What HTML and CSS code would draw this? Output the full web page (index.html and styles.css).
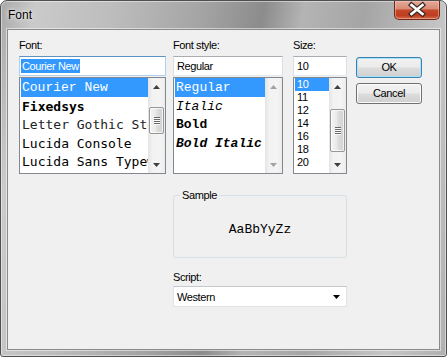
FILE: index.html
```html
<!DOCTYPE html>
<html lang="en">
<head>
    <meta charset="UTF-8">
    <title>Font</title>
    <link rel="stylesheet" href="styles.css">
</head>
<body>
    <div class="window">
        <div class="titlebar">
            <span class="title">Font</span>
            <div class="close">
                <svg width="44" height="17" viewBox="0 0 44 17">
                    <path d="M16.5 4 L27.5 13 M27.5 4 L16.5 13" stroke="#3c2a26" stroke-width="5" stroke-linecap="square"/>
                    <path d="M16.5 4 L27.5 13 M27.5 4 L16.5 13" stroke="#ffffff" stroke-width="2.6" stroke-linecap="square"/>
                </svg>
            </div>
        </div>
        <div class="client">
            <div class="top">
                <div class="col col-font">
                    <div class="label">Font:</div>
                    <div class="input focus"><span class="selected-text">Courier New</span></div>
                    <div class="list">
                        <div class="items">
                            <div class="item row-font selected courier">Courier New</div>
                            <div class="item row-font fixedsys">Fixedsys</div>
                            <div class="item row-font gothic">Letter Gothic Std</div>
                            <div class="item row-font lucida">Lucida Console</div>
                            <div class="item row-font lucida">Lucida Sans Typewriter</div>
                        </div>
                        <div class="scrollbar">
                            <div class="arrow"><svg width="7" height="4"><path d="M0 4 L3.5 0 L7 4 Z" fill="#404040"/></svg></div>
                            <div class="track">
                                <div class="thumb thumb-font">
                                    <span></span><span></span><span></span><span></span>
                                </div>
                            </div>
                            <div class="arrow"><svg width="7" height="4"><path d="M0 0 L7 0 L3.5 4 Z" fill="#404040"/></svg></div>
                        </div>
                    </div>
                </div>
                <div class="col col-style">
                    <div class="label">Font style:</div>
                    <div class="input">Regular</div>
                    <div class="list">
                        <div class="items">
                            <div class="item row-font courier selected">Regular</div>
                            <div class="item row-font courier italic">Italic</div>
                            <div class="item row-font courier bold">Bold</div>
                            <div class="item row-font courier bold italic">Bold Italic</div>
                        </div>
                        <div class="scrollbar">
                            <div class="arrow"><svg width="7" height="4"><path d="M0 4 L3.5 0 L7 4 Z" fill="#a3a3a3"/></svg></div>
                            <div class="track"></div>
                            <div class="arrow"><svg width="7" height="4"><path d="M0 0 L7 0 L3.5 4 Z" fill="#a3a3a3"/></svg></div>
                        </div>
                    </div>
                </div>
                <div class="col col-size">
                    <div class="label">Size:</div>
                    <div class="input">10</div>
                    <div class="list">
                        <div class="items">
                            <div class="item row-size selected">10</div>
                            <div class="item row-size">11</div>
                            <div class="item row-size">12</div>
                            <div class="item row-size">14</div>
                            <div class="item row-size">16</div>
                            <div class="item row-size">18</div>
                            <div class="item row-size">20</div>
                        </div>
                        <div class="scrollbar">
                            <div class="arrow"><svg width="7" height="4"><path d="M0 4 L3.5 0 L7 4 Z" fill="#404040"/></svg></div>
                            <div class="track">
                                <div class="thumb thumb-size">
                                    <span></span><span></span><span></span><span></span>
                                </div>
                            </div>
                            <div class="arrow"><svg width="7" height="4"><path d="M0 0 L7 0 L3.5 4 Z" fill="#404040"/></svg></div>
                        </div>
                    </div>
                </div>
                <div class="buttons">
                    <div class="button default">OK</div>
                    <div class="button">Cancel</div>
                </div>
            </div>
            <div class="bottom">
                <fieldset class="group">
                    <legend>Sample</legend>
                    <div class="sample">AaBbYyZz</div>
                </fieldset>
                <div class="label script-label">Script:</div>
                <div class="combo">
                    <span>Western</span>
                    <svg width="7" height="4"><path d="M0 0 L7 0 L3.5 4 Z" fill="#000"/></svg>
                </div>
            </div>
        </div>
    </div>
</body>
</html>
```

FILE: styles.css
```css
* {
    box-sizing: border-box;
}
body {
    margin: 0;
    background: #fff;
    font-family: "Liberation Sans", Arial, sans-serif;
    font-size: 11px;
    letter-spacing: -0.4px;
    color: #000;
}
.window {
    width: 447px;
    height: 357px;
    padding: 0 6px 6px;
    border: 1px solid #4f4f4f;
    border-radius: 7px 7px 3px 3px;
    background: linear-gradient(100deg, #a9a9a9 0%, #cacaca 7%, #bdbdbd 22%, #a4a4a4 40%, #8c8c8c 52%, #b4b4b4 60%, #a5a5a5 72%, #c6c6c6 88%, #b0b0b0 100%);
    box-shadow: inset 0 0 0 1px rgba(255, 255, 255, 0.45);
    display: flex;
    flex-direction: column;
}
.titlebar {
    height: 28px;
    display: flex;
    align-items: flex-start;
}
.title {
    font-size: 12px;
    letter-spacing: 0;
    line-height: 14px;
    padding: 7px 0 0 1px;
    text-shadow: 0 0 6px rgba(255, 255, 255, 0.9), 0 0 3px rgba(255, 255, 255, 0.8);
}
.close {
    margin-left: auto;
    width: 46px;
    height: 19px;
    border: 1px solid #6e2a1d;
    border-top: none;
    border-radius: 0 0 5px 5px;
    background: linear-gradient(#e2aa9b 0%, #d98b77 42%, #c6472a 52%, #c03c1f 80%, #d46c4e 100%);
    box-shadow: inset 0 0 0 1px rgba(255, 210, 190, 0.45);
}
.close svg {
    display: block;
}
.client {
    flex: 1;
    background: #f0f0f0;
    border: 1px solid #8a8a8a;
    box-shadow: 0 0 0 1px rgba(255, 255, 255, 0.5);
}
.top {
    display: flex;
    align-items: flex-start;
    padding: 8px 0 0 11px;
}
.col-font {
    width: 147px;
    margin-right: 7px;
}
.col-style {
    width: 110px;
    margin-right: 10px;
}
.col-size {
    width: 54px;
    margin-right: 9px;
}
.label {
    line-height: 15px;
    height: 15px;
}
.input {
    margin-top: 3px;
    height: 20px;
    background: #fff;
    border: 1px solid #dbdfe6;
    border-top-color: #abadb3;
    border-bottom-color: #e3e9ef;
    padding: 0 2px 0 3px;
    line-height: 18px;
    white-space: nowrap;
}
.input.focus {
    border-color: #b3d0ea;
    border-top-color: #5d93c0;
    padding-left: 1px;
}
.selected-text {
    display: inline-block;
    background: #3399ff;
    color: #fff;
    line-height: 14px;
    padding: 0 1px;
}
.list {
    margin-top: 1px;
    height: 97px;
    border: 1px solid #828790;
    background: #fff;
    display: flex;
    overflow: hidden;
}
.items {
    flex: 1;
    padding: 0 0 0 1px;
    overflow: hidden;
}
.item {
    white-space: nowrap;
    overflow: hidden;
    color: #000;
}
.item.selected {
    background: #3399ff;
    color: #fff;
}
.row-font {
    height: 18.5px;
    line-height: 19px;
    font-size: 13px;
    letter-spacing: 0;
    padding-left: 1px;
}
.courier {
    font-family: "Liberation Mono", "Courier New", monospace;
}
.fixedsys {
    font-family: "DejaVu Sans Mono", monospace;
    font-weight: bold;
}
.gothic {
    font-family: "DejaVu Sans Mono", monospace;
    color: #222;
}
.lucida {
    font-family: "DejaVu Sans Mono", monospace;
}
.italic {
    font-style: italic;
}
.bold {
    font-weight: bold;
}
.row-size {
    height: 13px;
    line-height: 13px;
    padding-left: 2px;
}
.scrollbar {
    width: 17px;
    display: flex;
    flex-direction: column;
    background: linear-gradient(to right, #e4e4e4 0%, #f2f2f2 25%, #f4f4f4 70%, #ececec 100%);
}
.arrow {
    height: 17px;
    display: flex;
    align-items: center;
    justify-content: center;
}
.arrow svg {
    display: block;
}
.track {
    flex: 1;
}
.thumb {
    margin: 0 1px;
    border: 1px solid #979797;
    border-radius: 2px;
    background: linear-gradient(to right, #f4f4f4 0%, #e9e9e9 45%, #dcdcdc 55%, #d2d2d2 100%);
    box-shadow: inset 0 0 0 1px rgba(255, 255, 255, 0.7);
    display: flex;
    flex-direction: column;
    align-items: center;
    justify-content: center;
    gap: 1px;
}
.thumb span {
    display: block;
    width: 6px;
    height: 1px;
    background: #6a6a6a;
    box-shadow: 0 1px 0 #fafafa;
}
.thumb-font {
    margin-top: 12px;
    height: 27px;
}
.thumb-size {
    margin-top: 14px;
    height: 43px;
}
.buttons {
    width: 66px;
    padding-top: 19px;
}
.button {
    height: 21px;
    border: 1px solid #707070;
    border-radius: 3px;
    background: linear-gradient(#f2f2f2 0%, #ebebeb 48%, #dddddd 52%, #cfcfcf 100%);
    box-shadow: inset 0 0 0 1px #fcfcfc;
    text-align: center;
    line-height: 19px;
}
.button + .button {
    margin-top: 5px;
}
.button.default {
    border-color: #3c7fb1;
    box-shadow: inset 0 0 0 1px #a8e4f9;
}
.bottom {
    margin-left: 165px;
    width: 174px;
}
.group {
    margin: 14px 0 0;
    padding: 0;
    height: 70px;
    border: 1px solid #d5dfe5;
    border-radius: 3px;
    min-inline-size: 0;
}
.group legend {
    margin-left: 6px;
    padding: 0 2px;
    line-height: 14px;
}
.sample {
    height: 55px;
    display: flex;
    align-items: center;
    justify-content: center;
    font-family: "Liberation Mono", "Courier New", monospace;
    font-size: 13px;
    letter-spacing: 0;
}
.script-label {
    margin-top: 12px;
    line-height: 14px;
    height: 14px;
}
.combo {
    margin-top: 2px;
    height: 21px;
    background: #fff;
    border: 1px solid #dfe3e8;
    border-top-color: #c5c8cd;
    display: flex;
    align-items: center;
    padding: 0 6px 0 3px;
}
.combo svg {
    margin-left: auto;
    display: block;
}
```
